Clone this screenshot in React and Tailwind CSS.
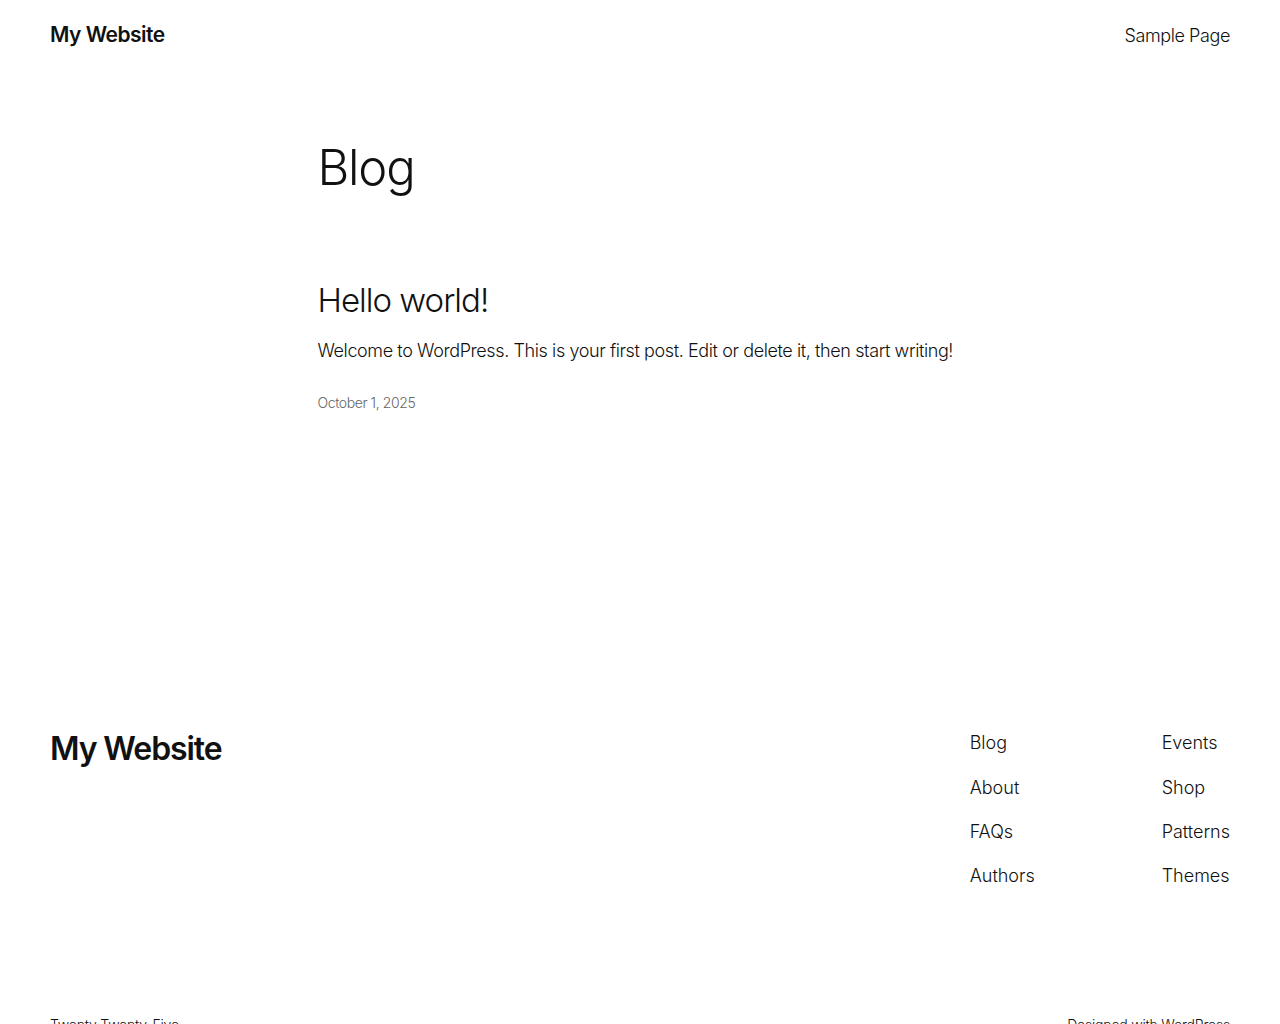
const FONT = { fontFamily: 'Inter, "Noto Sans", sans-serif' };

const footerCols = [
  ['Blog', 'About', 'FAQs', 'Authors'],
  ['Events', 'Shop', 'Patterns', 'Themes'],
];

export default function App() {
  return (
    <div style={FONT} className="min-h-screen bg-white text-[#111111]">
      <header className="flex h-[70px] items-center justify-between px-[50px]">
        <a href="#" className="text-[21px] font-semibold tracking-[-0.5px]">My Website</a>
        <nav>
          <a href="#" className="text-[18px] font-light tracking-[-0.4px]">Sample Page</a>
        </nav>
      </header>

      <main className="mx-auto w-[645px] pb-[317px]">
        <h1 className="mt-[69px] text-[49px] font-light leading-[1.2] tracking-[-1.2px]">Blog</h1>

        <article className="mt-[83px]">
          <h2 className="text-[33px] font-light leading-[1.2] tracking-[-1px]">Hello world!</h2>
          <p className="mt-[17px] text-[18px] font-light leading-[1.5] tracking-[-0.4px]">
            Welcome to WordPress. This is your first post. Edit or delete it, then start writing!
          </p>
          <p className="mt-[28px] text-[14px] font-light tracking-[-0.4px] text-[#666666]">October 1, 2025</p>
        </article>
      </main>

      <footer className="px-[50px]">
        <div className="flex items-start justify-between">
          <a href="#" className="text-[32px] font-semibold leading-[1.2] tracking-[-1.1px]">My Website</a>
          <div className="grid grid-cols-[192px_auto]">
            {footerCols.map((col, i) => (
              <ul key={i} className="flex flex-col gap-[19px]">
                {col.map((item) => (
                  <li key={item}>
                    <a href="#" className="text-[18px] font-light leading-[1.4] tracking-[0px]">{item}</a>
                  </li>
                ))}
              </ul>
            ))}
          </div>
        </div>
        <div className="mt-[126px] flex justify-between pb-[40px] text-[14px] font-light tracking-[-0.2px]">
          <p>Twenty Twenty-Five</p>
          <p>Designed with WordPress</p>
        </div>
      </footer>
    </div>
  );
}
